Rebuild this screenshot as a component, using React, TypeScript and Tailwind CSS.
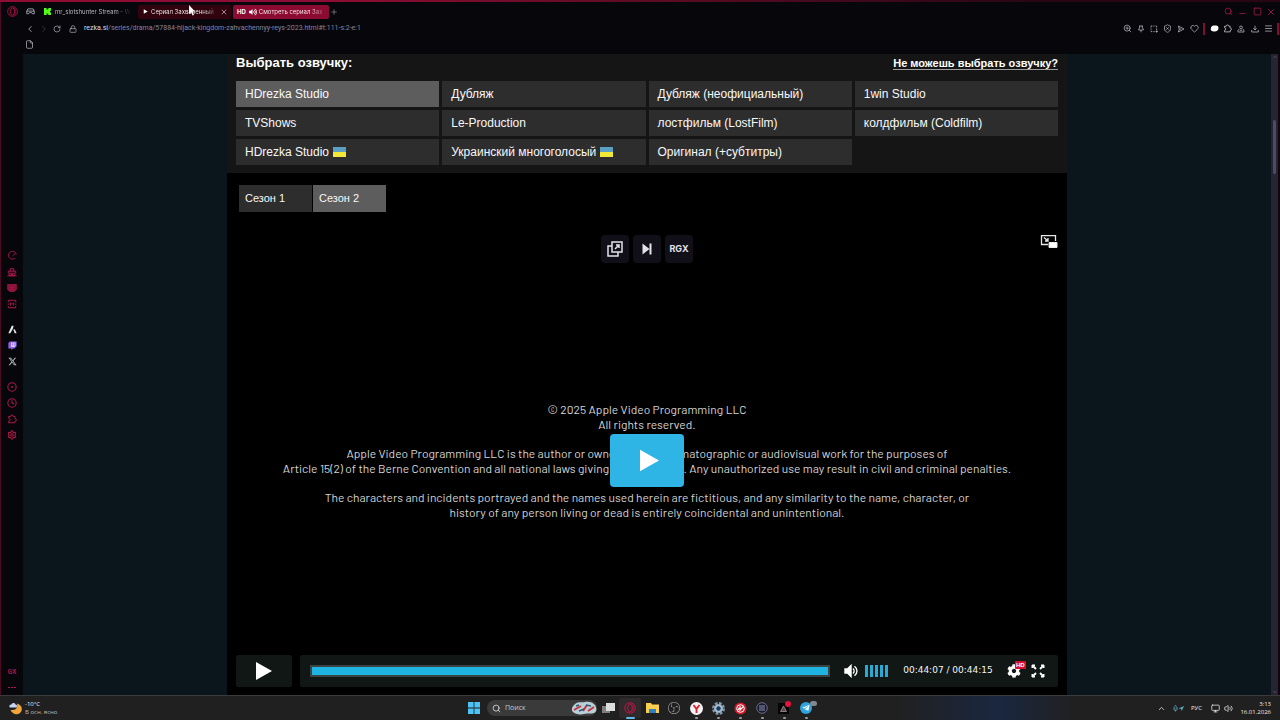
import type { ReactNode } from "react";
import {
  ChevronDown,
  ChevronLeft,
  ChevronRight,
  ChevronUp,
  CircleDot,
  Clock,
  File,
  Heart,
  Lock,
  Menu,
  Mic,
  Minus,
  Monitor,
  Navigation,
  Plus,
  RotateCw,
  Search,
  Settings,
  ShieldX,
  Square,
  Volume2,
  X,
  ZoomIn,
} from "lucide-react";
import { FaCog, FaTelegramPlane, FaTwitch, FaVolumeUp } from "react-icons/fa";
import { FaXTwitter } from "react-icons/fa6";
import { SiObsstudio } from "react-icons/si";

type Voice = { label: string; flag?: boolean };

const VOICES: Voice[] = [
  { label: "HDrezka Studio" },
  { label: "Дубляж" },
  { label: "Дубляж (неофициальный)" },
  { label: "1win Studio" },
  { label: "TVShows" },
  { label: "Le-Production" },
  { label: "лостфильм (LostFilm)" },
  { label: "колдфильм (Coldfilm)" },
  { label: "HDrezka Studio", flag: true },
  { label: "Украинский многоголосый", flag: true },
  { label: "Оригинал (+субтитры)" },
];

const SEASONS = ["Сезон 1", "Сезон 2"];

const COPYRIGHT = [
  ["© 2025 Apple Video Programming LLC", "All rights reserved."],
  [
    "Apple Video Programming LLC is the author or owner of this cinematographic or audiovisual work for the purposes of",
    "Article 15(2) of the Berne Convention and all national laws giving effect thereto. Any unauthorized use may result in civil and criminal penalties.",
  ],
  [
    "The characters and incidents portrayed and the names used herein are fictitious, and any similarity to the name, character, or",
    "history of any person living or dead is entirely coincidental and unintentional.",
  ],
];

function IconButton({
  label,
  className = "",
  children,
}: {
  label: string;
  className?: string;
  children: ReactNode;
}) {
  return (
    <button
      type="button"
      aria-label={label}
      className={`flex flex-none items-center justify-center ${className}`}
    >
      {children}
    </button>
  );
}

/** Outline glyph on a 24 grid, for the browser icons that the packages lack. */
function Glyph({ d, size = 9 }: { d: string; size?: number }) {
  return (
    <svg
      width={size}
      height={size}
      viewBox="0 0 24 24"
      fill="none"
      stroke="currentColor"
      strokeWidth="2.4"
      strokeLinejoin="round"
      className="flex-none"
    >
      <path d={d} />
    </svg>
  );
}

const PUZZLE = "M4 6h4.500a3.500 3.500 0 0 1 7 0H19v4.500a3.500 3.500 0 0 1 0 7V21H4v-4a3.500 3.500 0 0 0 0-7z";
const PIN = "M6 3h12M8 3v6l-3 3v3h14v-3l-3-3V3M12 15v7";
const SNAPSHOT = "M3 7V3h4M10 3h4M17 3h3v4M3 10v4M3 17v3h4M10 20h4M20 10v5M20 16v7M16.500 19.500h7";
const SEND = "M4 3l17 9-17 9 3-9zM7 12h6";
const PROFILE = "M12 3a4 4 0 0 1 4 4.500 4 4 0 0 1-8 0A4 4 0 0 1 12 3zM7 12l-4 4v5h18v-5l-4-4M8 16h8";
const DOWNLOAD = "M12 2v13M7 10l5 5 5-5M2 15v6h20v-6";
const WORKSPACE = "M5 5h14l3 6v7h-5l-2-3H9l-2 3H2v-7zM2 11h20";

function OperaRing({ size }: { size: number }) {
  return (
    <svg width={size} height={size} viewBox="0 0 24 24" fill="none" stroke="currentColor">
      <circle cx="12" cy="12" r="10.5" strokeWidth="2" />
      <ellipse cx="12" cy="12" rx="4.5" ry="8" strokeWidth="2" />
      <path d="M15 4.5c5 2 5 13 0 15" strokeWidth="1.5" />
    </svg>
  );
}

function TabStrip() {
  return (
    <div className="relative flex h-[19px] items-center">
      <IconButton label="Меню Opera" className="w-[22px] text-[#b01444]">
        <OperaRing size={11} />
      </IconButton>
      <IconButton label="Рабочее пространство" className="w-[15px] text-[#a9a9b2]">
        <Glyph d={WORKSPACE} />
      </IconButton>

      <button type="button" className="ml-[6px] flex h-[14px] w-[92px] items-center gap-1">
        <svg width="7" height="7" viewBox="0 0 8 8" className="flex-none fill-[#53fc18]">
          <path d="M0 0h3v2h1V1h1V0h3v3H7v1H6v0h1v1h1v3H5V7H4V6H3v2H0z" />
        </svg>
        <span className="bg-linear-to-r from-[#c4c4cc] from-80% to-transparent bg-clip-text text-left whitespace-nowrap text-transparent">
          mr_slotshunter Stream - W
        </span>
      </button>

      <div className="ml-[2px] flex h-[14px] w-[93px] items-center rounded-xs bg-[#30030f]">
        <button type="button" className="flex flex-1 items-center pl-1">
          <svg width="7" height="7" viewBox="0 0 8 8" className="flex-none fill-white">
            <path d="M2 1.500l4.500 2.500L2 6.500z" />
          </svg>
          <span className="ml-[2px] bg-linear-to-r from-white from-80% to-[#ffffff50] bg-clip-text text-left whitespace-nowrap text-transparent">
            Сериал Захваченный
          </span>
        </button>
        <IconButton label="Закрыть вкладку" className="w-[15px] text-[#d9c6cd]">
          <X size={8} />
        </IconButton>
      </div>

      <button
        type="button"
        className="ml-[2px] flex h-[14px] w-[96px] items-center rounded-xs bg-[#8b0b33] pl-[4px]"
      >
        <span className="font-bold text-white">HD</span>
        <FaVolumeUp size={8} className="ml-[3px] flex-none text-white" />
        <span className="ml-[2px] bg-linear-to-r from-white from-80% to-[#ffffff50] bg-clip-text text-left whitespace-nowrap text-transparent">
          Смотреть сериал Зах
        </span>
      </button>
      <IconButton label="Новая вкладка" className="w-[9px] text-[#8f8f98]">
        <Plus size={8} />
      </IconButton>

      <div className="ml-auto flex items-center pr-[2px] text-[#b01c49]">
        <IconButton label="Поиск вкладок" className="w-[14px]">
          <Search size={9} />
        </IconButton>
        <IconButton label="Свернуть" className="w-[15px] pt-1">
          <Minus size={9} />
        </IconButton>
        <IconButton label="Развернуть" className="w-[14px]">
          <Square size={9} />
        </IconButton>
        <IconButton label="Закрыть" className="w-[14px]">
          <X size={10} />
        </IconButton>
      </div>

      {/* mouse pointer over the second tab */}
      <svg
        width="8"
        height="11"
        viewBox="0 0 8 11"
        className="absolute top-[3px] left-[187px] fill-white"
      >
        <path d="M1 0l6 6.5H4.6L6 10l-1.4.6L3.200 7.200 1 9z" />
      </svg>
    </div>
  );
}

function AddressBar() {
  return (
    <div className="flex h-[15px] items-center font-['Roboto',sans-serif] text-[7px] text-[#b4b4bc]">
      <div className="flex items-center pl-[22px]">
        <IconButton label="Назад" className="w-[14px]">
          <ChevronLeft size={10} />
        </IconButton>
        <IconButton label="Вперёд" className="w-[13px] text-[#3d3d45]">
          <ChevronRight size={10} />
        </IconButton>
        <IconButton label="Обновить" className="w-[13px]">
          <RotateCw size={8} />
        </IconButton>
        <IconButton label="Сведения о сайте" className="ml-[3px] w-[14px]">
          <Lock size={8} />
        </IconButton>
      </div>
      <label htmlFor="address" className="ml-[4px] text-[#dcdce2]">
        rezka.si
      </label>
      <input
        id="address"
        defaultValue="/series/drama/57884-hijack-kingdom-zahvachennyy-reys-2023.html#t:111-s:2-e:1"
        className="min-w-0 flex-1 bg-transparent text-[#8583a0] outline-none"
      />
      <div className="flex items-center">
        {[
          { label: "Масштаб", icon: <ZoomIn size={9} /> },
          { label: "Закрепить", icon: <Glyph d={PIN} size={8} /> },
          { label: "Снимок", icon: <Glyph d={SNAPSHOT} size={8} /> },
          { label: "Блокировка рекламы", icon: <ShieldX size={9} /> },
          { label: "Отправить", icon: <Glyph d={SEND} size={8} /> },
          { label: "Избранное", icon: <Heart size={9} /> },
        ].map((item, i) => (
          <IconButton key={item.label} label={item.label} className={i % 2 ? "w-[13px]" : "w-[14px]"}>
            {item.icon}
          </IconButton>
        ))}
        <span className="mx-[2px] h-[12px] w-[2px] bg-[#7c0f33]" />
        {[
          {
            label: "Расширение",
            icon: (
              <svg width="9" height="9" viewBox="0 0 9 9" className="fill-white">
                <path d="M1 4c0-2 2-2.500 4-2.500S8.500 2 8.500 4 7 7.500 4.500 7.500 0 6.500 1 4z" />
              </svg>
            ),
          },
          { label: "Расширения", icon: <Glyph d={PUZZLE} /> },
          { label: "Профиль", icon: <Glyph d={PROFILE} size={8} /> },
          { label: "Загрузки", icon: <Glyph d={DOWNLOAD} size={8} /> },
          { label: "Настройки панели", icon: <Menu size={9} /> },
        ].map((item, i) => (
          <IconButton key={item.label} label={item.label} className={i % 2 ? "w-[13px]" : "w-[14px]"}>
            {item.icon}
          </IconButton>
        ))}
        <span className="mr-px ml-[2px] h-[12px] w-[2px] bg-[#7c0f33]" />
      </div>
    </div>
  );
}

function SideBar() {
  return (
    <nav
      aria-label="Боковая панель"
      className="flex w-[22px] flex-none flex-col items-center text-[#b01849]"
    >
      <div className="flex flex-1 flex-col justify-center pb-[27px]">
        <IconButton label="GX Control" className="h-4">
          <Glyph d="M19 19A10.500 10.500 0 1 1 22 9M12 13l8-7" />
        </IconButton>
        <IconButton label="Очистка" className="h-4">
          <Glyph d="M8 10V4h8v6M3 15v-5h18v5M5 15h14v6H5zM1 21h22M9 18h6" size={10} />
        </IconButton>
        <IconButton label="Моды" className="h-4">
          <svg width="10" height="10" viewBox="0 0 24 24" fill="none" stroke="currentColor" strokeWidth="2.500">
            <path d="M2 4h20v11l-5 5H7l-5-5z" fill="#7e1134" />
            <path d="M6 12l5-4M12 12l5-4M7 15h10" />
          </svg>
        </IconButton>
        <IconButton label="Игры" className="h-4">
          <Glyph d="M3 8V3h18v5M3 11v3M21 11v3M3 17v4h18v-4M8 16V9l4 4 4-4v7" size={10} />
        </IconButton>
        <div className="h-[10px]" />
        <IconButton label="Aria" className="h-4">
          <svg width="9" height="9" viewBox="0 0 24 24" className="fill-[#e8e8ea]">
            <path d="M10 2h5l-2 8-7 12H1zM14 12l4-1 5 11h-5z" />
          </svg>
        </IconButton>
        <IconButton label="Twitch" className="h-4">
          <svg width="9" height="9" viewBox="0 0 24 24" fill="#8f62ee">
            <path d="M5 1h18v13l-6 6h-4l-4 4v-4H1V5z" />
            <path d="M8 4h12v9l-3 3H8z" fill="#d9caff" />
            <path d="M11 6h2v6h-2zM16 6h2v6h-2z" />
          </svg>
        </IconButton>
        <IconButton label="X" className="h-4">
          <FaXTwitter size={9} className="text-[#c4c4c8]" />
        </IconButton>
        <div className="h-[9px]" />
        <IconButton label="Плеер" className="h-4">
          <CircleDot size={10} strokeWidth={2.5} />
        </IconButton>
        <IconButton label="История" className="h-4">
          <Clock size={10} strokeWidth={2.5} />
        </IconButton>
        <IconButton label="Расширения" className="h-4">
          <Glyph d={PUZZLE} size={10} />
        </IconButton>
        <IconButton label="Настройки" className="h-4">
          <Settings size={10} strokeWidth={2.5} />
        </IconButton>
      </div>
      <button type="button" className="h-4 text-[6px] font-bold">
        GX
      </button>
      <button type="button" aria-label="Ещё" className="flex h-4 items-center gap-px">
        <span className="h-px w-[2px] bg-[#b01849]" />
        <span className="h-px w-[2px] bg-[#b01849]" />
        <span className="h-px w-[2px] bg-[#b01849]" />
      </button>
    </nav>
  );
}

function VoicePicker() {
  return (
    <section className="bg-[#151515] px-[9px] pb-2 font-['Liberation_Sans',Arial,sans-serif] text-white">
      <div className="mb-[9px] flex h-[18px] items-center justify-between">
        <h2 className="text-[13px] font-bold">Выбрать озвучку:</h2>
        <a href="#help" className="border-b border-[#a0a0a0] text-[11px] leading-[12px] font-bold">
          Не можешь выбрать озвучку?
        </a>
      </div>
      <ul className="grid grid-cols-4 gap-[3px]">
        {VOICES.map((voice, i) => (
          <li key={i}>
            <button
              type="button"
              aria-pressed={i === 0}
              className={`flex h-[26px] w-full items-center gap-1 px-[9px] text-[12px] text-[#f8f8f8] ${
                i === 0 ? "bg-[#5d5d5d]" : "bg-[#2d2d2d]"
              }`}
            >
              {voice.label}
              {voice.flag && (
                <span className="flex h-[10px] w-[13px] flex-col">
                  <span className="flex-1 bg-[#5b9fc4]" />
                  <span className="flex-1 bg-[#f2e838]" />
                </span>
              )}
            </button>
          </li>
        ))}
      </ul>
    </section>
  );
}

function PlayIcon({ className }: { className: string }) {
  return (
    <svg viewBox="0 0 16 18" className={`fill-white ${className}`}>
      <path d="M0 0l16 9-16 9z" />
    </svg>
  );
}

function PlayerTools() {
  const tool = "size-[28px] rounded-sm bg-[#110f18] text-[#e3e2ea]";
  return (
    <div className="grid h-[40px] grid-cols-[1fr_auto_1fr] items-start px-[9px] pt-[9px]">
      <div />
      <div className="flex gap-1">
        <IconButton label="Открыть отдельно" className={tool}>
          <svg width="16" height="16" viewBox="0 0 16 16" fill="none" stroke="currentColor" strokeWidth="1.500">
            <path d="M5 1h10v10H5zM5 5H1v10h10v-4M8 8l4-4M9 4h3v3" />
          </svg>
        </IconButton>
        <IconButton label="Следующая серия" className={tool}>
          <svg width="10" height="12" viewBox="0 0 10 12" fill="currentColor">
            <path d="M0.500 0.500l7 5.500-7 5.500zM7.500 0.500H9.500v11H7.500z" />
          </svg>
        </IconButton>
        <IconButton label="RGX" className={`${tool} font-['Inter',sans-serif] text-[9px] font-bold`}>
          RGX
        </IconButton>
      </div>
      <IconButton label="Картинка в картинке" className="justify-self-end">
        <svg width="18" height="13" viewBox="0 0 18 13" fill="none" stroke="#e8e8e8">
          <path d="M8 9.500H1.500V.7h14V6" strokeWidth="1.300" />
          <path d="M4 2.500l4 3.500M8 3v3H5" strokeWidth="1.300" />
          <path d="M9 7.500h8v5H9z" fill="#fff" />
        </svg>
      </IconButton>
    </div>
  );
}

function PlayerControls() {
  return (
    <div className="flex h-[40px] gap-2 px-[9px] pb-2">
      <IconButton label="Воспроизвести" className="w-[56px] rounded-xs bg-[#101714]">
        <PlayIcon className="h-[18px] w-[16px]" />
      </IconButton>
      <div className="flex flex-1 items-center rounded-xs bg-[#101714] px-[10px]">
        <input
          type="range"
          aria-label="Позиция"
          defaultValue={100}
          className="h-[12px] min-w-0 flex-1 appearance-none border-2 border-[#3a4442] bg-[#1fb5e2] [&::-webkit-slider-thumb]:size-0 [&::-webkit-slider-thumb]:appearance-none"
        />
        <IconButton label="Звук" className="ml-[13px] w-[16px]">
          <svg width="15" height="14" viewBox="0 0 15 14" fill="none" stroke="#fff" strokeWidth="1.400">
            <path d="M1 5h2.500L7 1.500v11L3.500 9H1z" fill="#fff" />
            <path d="M9 4.500c1.500 1.500 1.500 3.500 0 5M10.500 2.300c3.300 2.500 3.300 7 0 9.400" />
          </svg>
        </IconButton>
        <div className="ml-[6px] flex gap-[2px]" aria-hidden="true">
          {[0, 1, 2, 3, 4].map((i) => (
            <span key={i} className="h-[12px] w-[3px] bg-[#25abd6]" />
          ))}
        </div>
        <span className="ml-[13px] w-[94px] text-center font-['DejaVu_Sans',Verdana,sans-serif] text-[9px] whitespace-nowrap text-[#f4f4f4]">
          00:44:07 / 00:44:15
        </span>
        <div className="relative ml-[12px]">
          <IconButton label="Качество" className="w-[14px] text-white">
            <FaCog size={14} />
          </IconButton>
          <span className="absolute -top-[3px] left-[8px] rounded-[1px] bg-[#d4102a] px-px font-['Liberation_Sans',Arial,sans-serif] text-[6px] leading-[8px] font-bold text-white">
            HD
          </span>
        </div>
        <IconButton label="Полный экран" className="ml-[10px]">
          <svg width="14" height="14" viewBox="0 0 14 14" fill="#fff" stroke="#fff" strokeWidth="1.800">
            <path d="M1 4V1h3zM10 1h3v3zM13 10v3h-3zM4 13H1v-3z" strokeWidth="1" />
            <path d="M1.500 1.500l3.500 3.500M12.500 1.500L9 5M12.500 12.500L9 9M1.500 12.500L5 9" />
          </svg>
        </IconButton>
        <span className="w-[3px]" />
      </div>
    </div>
  );
}

function Player() {
  return (
    <section className="flex flex-1 flex-col">
      <PlayerTools />
      <div className="relative flex flex-1 flex-col items-center justify-center gap-[14px] pt-px text-center font-['Barlow','Roboto',sans-serif] text-[12px] leading-[15px] text-[#d4d4d4]">
        {COPYRIGHT.map((lines, i) => (
          <div key={i}>
            {lines.map((line) => (
              <p key={line} className="whitespace-nowrap">
                {line}
              </p>
            ))}
          </div>
        ))}
        <div className="absolute inset-0 flex items-center justify-center">
          <IconButton label="Смотреть" className="h-[53px] w-[74px] rounded-sm bg-[#2eb5e6]">
            <PlayIcon className="ml-1 h-[23px] w-[19px]" />
          </IconButton>
        </div>
      </div>
      <PlayerControls />
    </section>
  );
}

function Page() {
  return (
    <main className="flex flex-1 justify-center bg-[#0a161b]">
      <div className="flex w-[840px] flex-col bg-black">
        <VoicePicker />
        <div className="flex gap-px px-3 pt-3 pb-[14px] font-['Liberation_Sans',Arial,sans-serif]">
          {SEASONS.map((season, i) => (
            <button
              key={season}
              type="button"
              aria-pressed={i === 1}
              className={`h-[27px] w-[73px] px-[6px] text-left text-[11px] text-[#f8f8f8] ${
                i === 1 ? "bg-[#5d5d5d]" : "bg-[#2d2d2d]"
              }`}
            >
              {season}
            </button>
          ))}
        </div>
        <Player />
      </div>
    </main>
  );
}

function ScrollBar() {
  return (
    <div className="flex w-[7px] flex-none flex-col items-center bg-[#252433] text-[#77768c]">
      <ChevronUp size={6} />
      <span className="mt-[60px] h-[54px] w-[3px] rounded-full bg-[#4d4c66]" />
      <ChevronDown size={6} className="mt-auto" />
    </div>
  );
}

function TaskIcon({
  label,
  active,
  running,
  children,
}: {
  label: string;
  active?: boolean;
  running?: boolean;
  children: ReactNode;
}) {
  return (
    <button
      type="button"
      aria-label={label}
      className={`relative flex h-[20px] w-[22px] items-center justify-center rounded-xs ${
        active ? "bg-[#2f2b2d]" : ""
      }`}
    >
      {children}
      {active && <span className="absolute -bottom-px h-[2px] w-[9px] rounded-full bg-[#5fb8ea]" />}
      {running && <span className="absolute -bottom-px h-[2px] w-[3px] rounded-full bg-[#9a9a9a]" />}
    </button>
  );
}

function TaskBar() {
  return (
    <footer className="grid h-[25px] grid-cols-[1fr_auto_1fr] items-center border-t border-[#3b3b3b] bg-[#202020] bg-linear-to-r from-[#202020] from-70% via-[#1a2740] via-78% to-[#202020] to-84% font-['Open_Sans',sans-serif] text-[6px] text-[#ececec]">
      <button type="button" className="flex items-center gap-[3px] justify-self-start pl-[9px] text-left">
        <svg width="13" height="13" viewBox="0 0 13 13">
          <path d="M8 1.500c1 4-1 7-6.500 6.500C3 12 8 13.500 11 11s2.500-8-3-9.500z" fill="#f0a63c" />
          <path d="M1 5.500C-.5 4 1 2 2.500 2.500 3 .5 6 .5 6.500 2.500 8.500 2.500 8.500 5.500 7 5.500z" fill="#c5d4f2" />
        </svg>
        <span className="leading-[8px]">
          -10°C
          <br />
          <span className="text-[#b8b8b8]">В осн. ясно</span>
        </span>
      </button>

      <div className="flex items-center">
        <TaskIcon label="Пуск">
          <svg width="12" height="12" viewBox="0 0 12 12" fill="#4cc2f5">
            <path d="M0 0h5.600v5.600H0zM6.400 0H12v5.600H6.400zM0 6.400h5.600V12H0zM6.400 6.400H12V12H6.400z" />
          </svg>
        </TaskIcon>
        <div className="ml-[2px] flex h-[16px] w-[110px] items-center rounded-full bg-[#3a3a3a] pl-[5px]">
          <Search size={9} className="flex-none" />
          <input
            aria-label="Поиск"
            placeholder="Поиск"
            className="ml-[4px] min-w-0 flex-1 bg-transparent text-[7px] outline-none placeholder:text-[#c8c8c8]"
          />
          <svg width="26" height="14" viewBox="0 0 26 14" className="flex-none">
            <path d="M3 4C6 0 11 2 14 1s8 0 10 3 2 7-1 8-6 0-10 1-9 0-11-2-1-5 1-7z" fill="#b9cfd8" />
            <path d="M3 9l7-4M12 10l4-6M17 10l6-4" stroke="#c43340" strokeWidth="2" />
            <path d="M8 10l5-2M15 4l5 1M5 5l3-1" stroke="#2e5c77" strokeWidth="1.500" />
          </svg>
        </div>
        <TaskIcon label="Представление задач">
          <svg width="13" height="12" viewBox="0 0 13 12">
            <path d="M0 4h8v7H0z" fill="#7e7e7e" />
            <path d="M4 1h9v8H4z" fill="#dcdcdc" />
          </svg>
        </TaskIcon>
        <TaskIcon label="Opera GX" active>
          <span className="text-[#c01445]">
            <OperaRing size={12} />
          </span>
        </TaskIcon>
        <TaskIcon label="Проводник">
          <svg width="13" height="12" viewBox="0 0 13 12">
            <path d="M0 1h5l1 1.500h7V11H0z" fill="#fbcf4d" />
            <path d="M3 7h7v4H3z" fill="#2c7fc4" />
          </svg>
        </TaskIcon>
        <TaskIcon label="OBS Studio">
          <SiObsstudio size={12} className="text-[#b5b5b5]" />
        </TaskIcon>
        <TaskIcon label="Яндекс Браузер" running>
          <svg width="13" height="13" viewBox="0 0 13 13">
            <circle cx="6.500" cy="6.500" r="6.500" fill="#f4f4f4" />
            <path d="M3.500 3l3 4 3-4M6.500 7v4" fill="none" stroke="#dd1f2b" strokeWidth="1.800" />
          </svg>
        </TaskIcon>
        <TaskIcon label="Параметры" running>
          <svg width="13" height="13" viewBox="0 0 13 13" fill="none">
            <circle cx="6.500" cy="6.500" r="5" stroke="#7f97ab" strokeWidth="3" strokeDasharray="2.600 1.300" />
            <circle cx="6.500" cy="6.500" r="4.300" fill="#a9bccb" />
            <circle cx="6.500" cy="6.500" r="2.200" fill="#123c66" />
          </svg>
        </TaskIcon>
        <TaskIcon label="Монитор" running>
          <svg width="13" height="13" viewBox="0 0 13 13" fill="none">
            <circle cx="6.500" cy="6.500" r="6" fill="#d31a2c" />
            <circle cx="6.500" cy="6.500" r="3.800" stroke="#fff" />
            <path d="M3.500 8.500L6 5v3l3.500-3.500" stroke="#fff" strokeWidth="1.200" />
          </svg>
        </TaskIcon>
        <TaskIcon label="Плеер" running>
          <svg width="12" height="12" viewBox="0 0 12 12" fill="none">
            <circle cx="6" cy="6" r="5.300" fill="#17182a" stroke="#6d6d8a" />
            <path d="M3 4h6M3 6h6M3 8h6" stroke="#8f90b5" strokeWidth="1.100" />
          </svg>
        </TaskIcon>
        <TaskIcon label="Уведомления игры" running>
          <svg width="14" height="14" viewBox="0 0 14 14" fill="none">
            <path d="M1 2h11v11H1z" fill="#050505" />
            <path d="M6.500 5l3 5.500h-6z" fill="#5d4a50" stroke="#a8a0a4" strokeWidth=".7" />
            <circle cx="11" cy="3" r="3" fill="#e5133c" />
          </svg>
        </TaskIcon>
        <TaskIcon label="Telegram" running>
          <span className="flex size-[12px] items-center justify-center rounded-full bg-[#2ea3dc] text-white">
            <FaTelegramPlane size={8} />
          </span>
          <span className="absolute top-[3px] right-0 h-[5px] w-[7px] rounded-full bg-[#7d8a92]" />
        </TaskIcon>
      </div>

      <div className="flex items-center justify-self-end pr-[9px]">
        <IconButton label="Скрытые значки" className="w-[14px]">
          <ChevronUp size={9} />
        </IconButton>
        <IconButton label="Микрофон и геопозиция" className="w-[20px] text-[#62b4c9]">
          <Mic size={7} />
          <Navigation size={5} fill="currentColor" />
        </IconButton>
        <button type="button" className="w-[17px]">
          РУС
        </button>
        <IconButton label="Сеть" className="ml-[4px] w-[13px]">
          <Monitor size={9} />
        </IconButton>
        <IconButton label="Громкость" className="w-[13px]">
          <Volume2 size={9} />
        </IconButton>
        <button type="button" className="ml-[4px] w-[32px] text-right leading-[8px] whitespace-nowrap">
          3:13
          <br />
          16.01.2026
        </button>
      </div>
    </footer>
  );
}

export default function App() {
  return (
    <div className="flex min-h-screen flex-col bg-[#07060b]">
      <div className="h-[2px] bg-linear-to-r from-[#8f0c35] from-25% to-[#2a0613] to-80%" />
      <div className="flex flex-1 flex-col border-l border-[#4a0a20] font-['Inter',sans-serif] text-[6px]">
        <header>
          <TabStrip />
          <AddressBar />
          <div className="flex h-[18px] items-start pt-1 pl-[24px] text-[#b4b4bc]">
            <IconButton label="Закладка">
              <File size={9} />
            </IconButton>
          </div>
        </header>
        <div className="flex flex-1">
          <SideBar />
          <Page />
          <ScrollBar />
          <div className="w-[2px] flex-none bg-[#12060c]" />
        </div>
      </div>
      <TaskBar />
    </div>
  );
}
